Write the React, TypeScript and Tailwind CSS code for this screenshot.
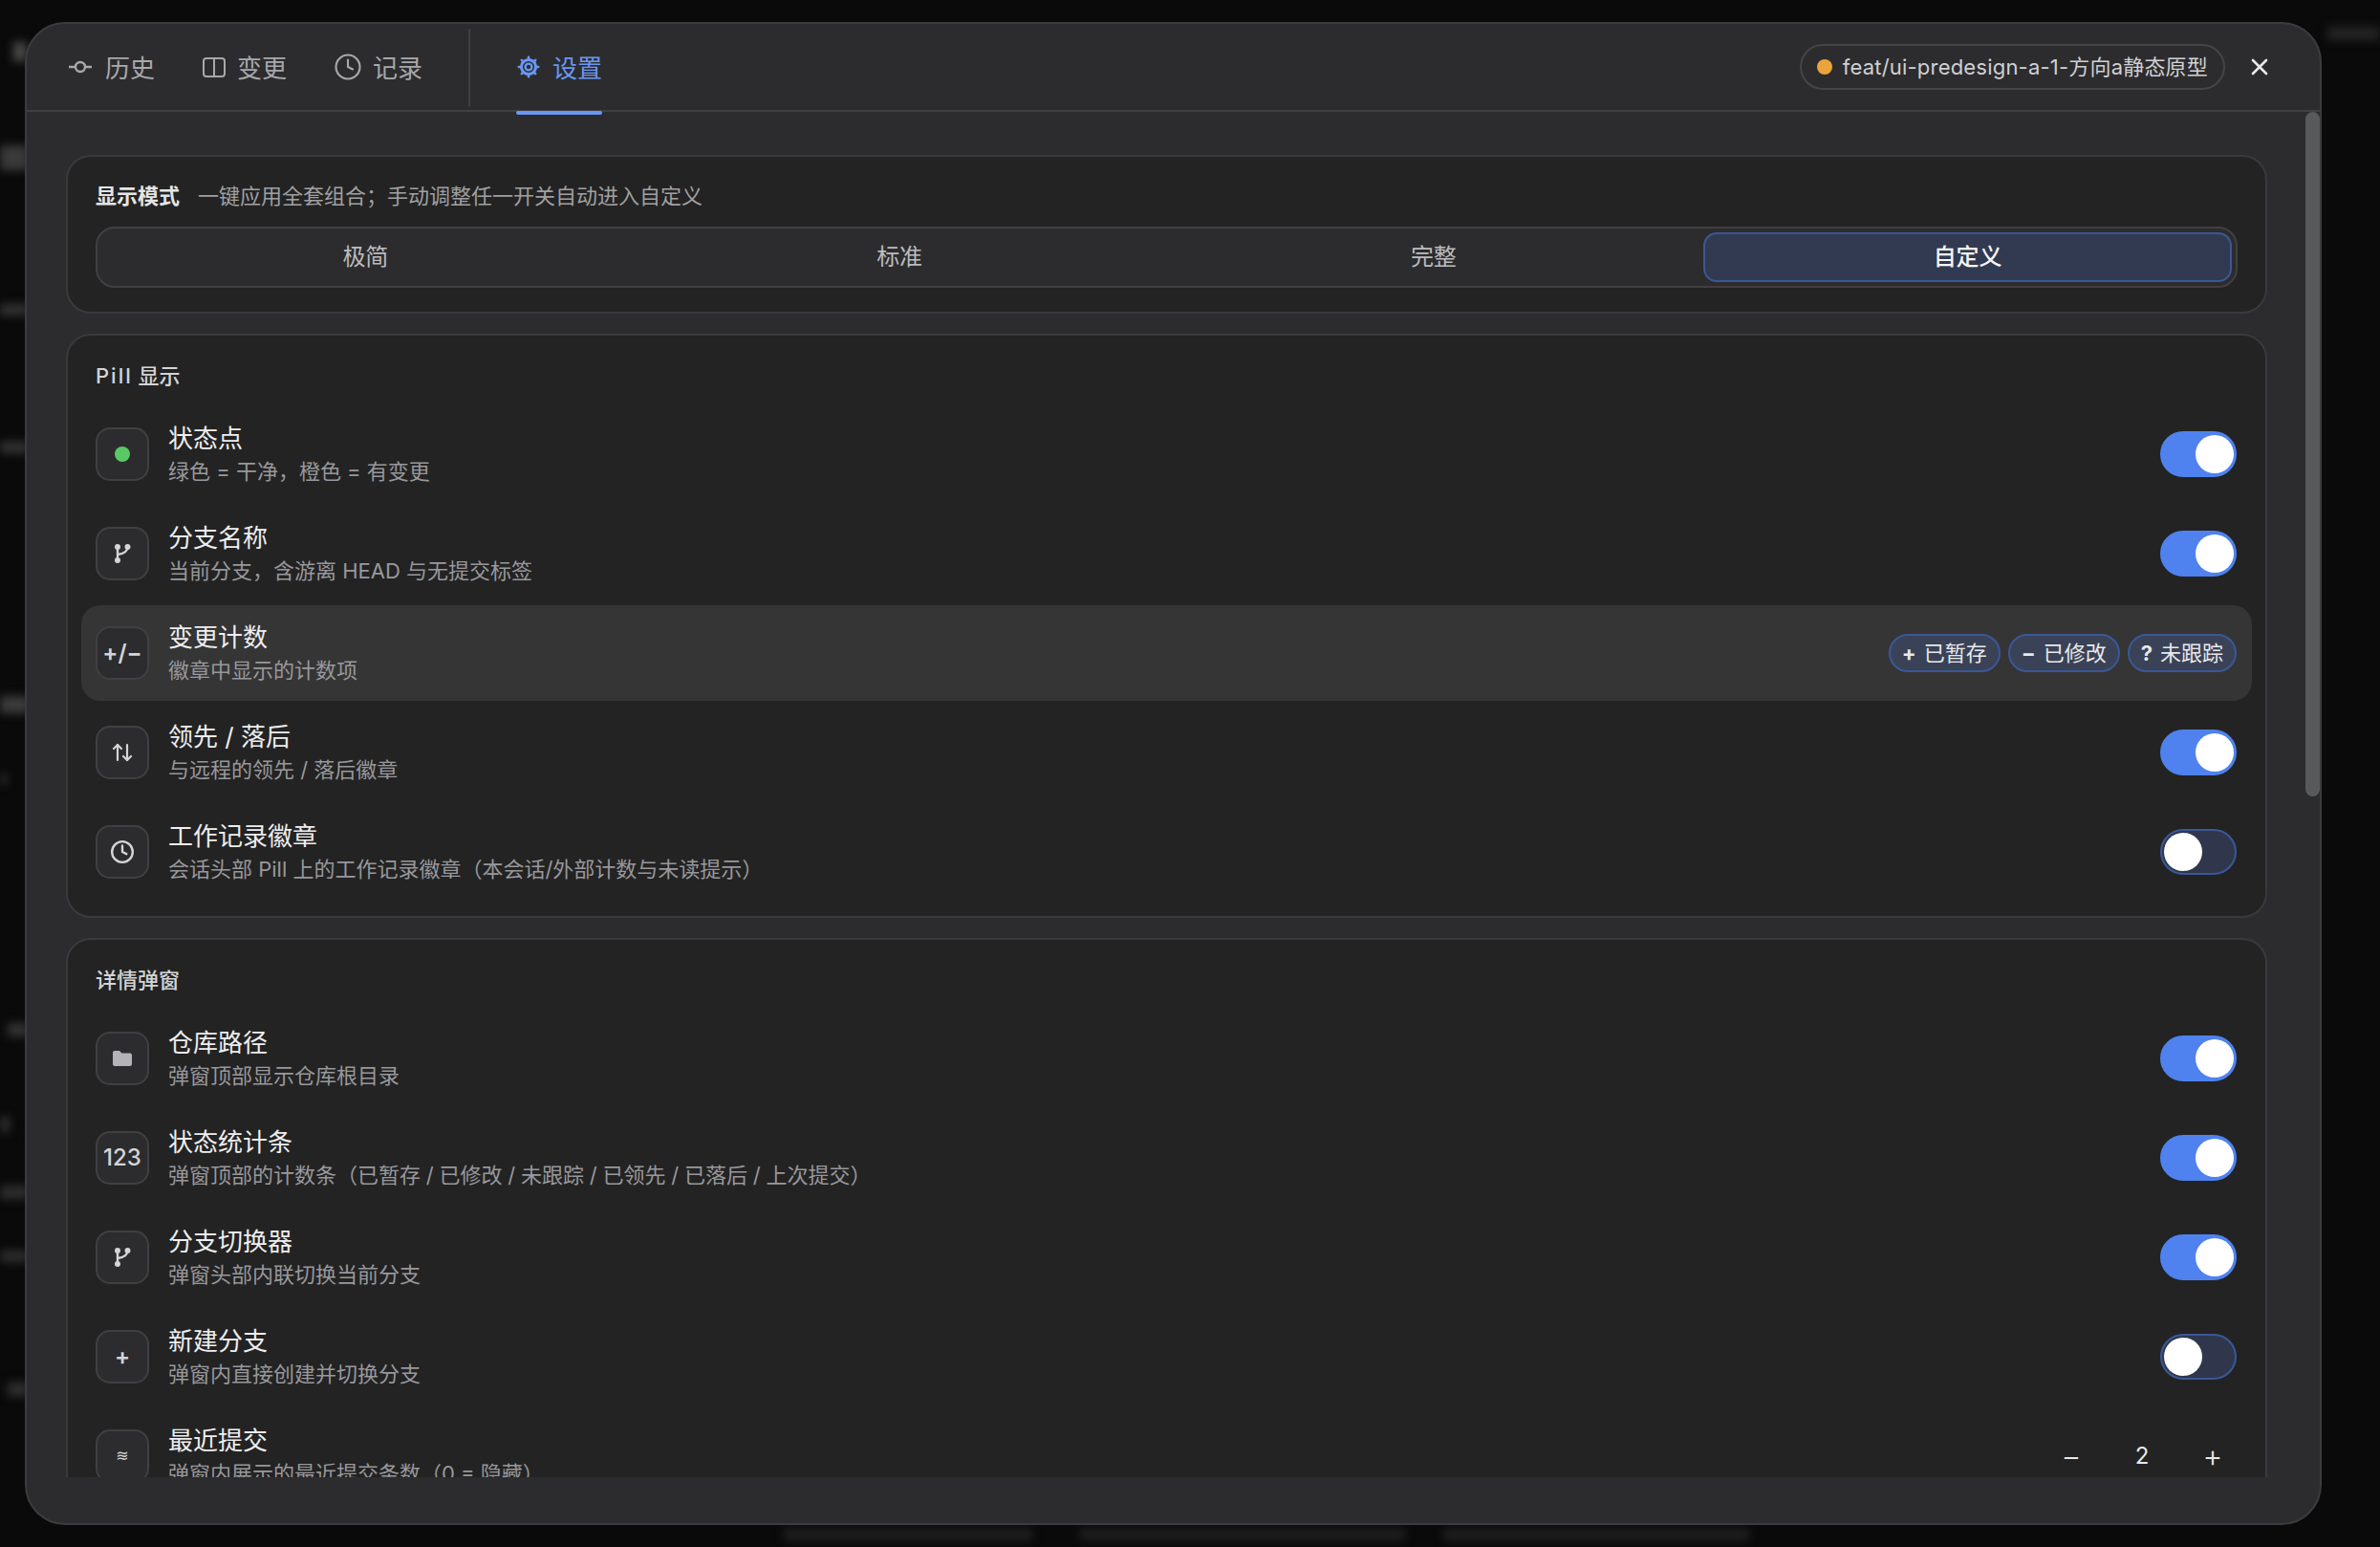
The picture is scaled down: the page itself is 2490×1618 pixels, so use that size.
import type { ReactNode } from "react"
import { ArrowUpDown, Clock } from "lucide-react"

const BACKDROP = [
  "top-[44px] left-[14px] w-[14px] h-[20px] bg-[#4a4a4a]",
  "top-[152px] left-0 w-[30px] h-[26px] bg-[#3a3a3a]",
  "top-[318px] left-0 w-[30px] h-[12px] bg-[#333333]",
  "top-[462px] left-0 w-[30px] h-[12px] bg-[#333333]",
  "top-[728px] left-0 w-[30px] h-[18px] bg-[#3c3c3c]",
  "top-[810px] left-0 w-[8px] h-[10px] bg-[#2c2c2c]",
  "top-[1070px] left-[8px] w-[22px] h-[14px] bg-[#333333]",
  "top-[1168px] left-0 w-[10px] h-[16px] bg-[#303030]",
  "top-[1240px] left-0 w-[30px] h-[14px] bg-[#2e2e2e]",
  "top-[1308px] left-0 w-[30px] h-[12px] bg-[#2e2e2e]",
  "top-[1446px] left-[8px] w-[22px] h-[14px] bg-[#303030]",
  "top-[1598px] left-[820px] w-[260px] h-[14px] bg-[#1e1e1e]",
  "top-[1598px] left-[1130px] w-[340px] h-[14px] bg-[#1e1e1e]",
  "top-[1598px] left-[1510px] w-[320px] h-[14px] bg-[#1e1e1e]",
  "top-[28px] left-[2435px] w-[55px] h-[14px] bg-[#242424]",
]

function Backdrop() {
  return (
    <>
      {BACKDROP.map((cls) => (
        <div key={cls} className={`absolute blur-[5px] ${cls}`} />
      ))}
    </>
  )
}

function CommitIcon() {
  return (
    <svg width="24" height="16" viewBox="0 0 24 16" fill="none" stroke="#a8a8aa" strokeWidth="2.4">
      <circle cx="12" cy="8" r="5" />
      <path d="M0 8h7M17 8h7" />
    </svg>
  )
}

function ColumnsIcon() {
  return (
    <svg width="24" height="21" viewBox="0 0 24 21" fill="none" stroke="#a8a8aa" strokeWidth="2">
      <rect x="1" y="1" width="22" height="19" rx="3" />
      <path d="M12 1v19" />
    </svg>
  )
}

function GearIcon() {
  return (
    <svg width="26" height="26" viewBox="0 0 26 26" fill="none" stroke="#6a97f4">
      <circle cx="13" cy="13" r="3.4" strokeWidth="2.4" />
      <circle cx="13" cy="13" r="7.600" strokeWidth="3" />
      <path
        d="M13 2.800v2.400M13 20.800v2.400M2.800 13h2.400M20.800 13h2.400M5.800 5.800l1.700 1.700M18.500 18.500l1.700 1.700M5.800 20.200l1.700-1.700M18.500 7.500l1.700-1.700"
        strokeWidth="2.600"
        strokeLinecap="round"
      />
    </svg>
  )
}

function BranchIcon() {
  return (
    <svg width="24" height="24" viewBox="0 0 24 24" fill="none" stroke="#d4d4d6" strokeWidth="2.4">
      <path d="M7 5v14M17.500 5c0 4.500-3 7-10.500 8" />
      <circle cx="7" cy="5" r="3" fill="#d4d4d6" stroke="none" />
      <circle cx="17.500" cy="5" r="3" fill="#d4d4d6" stroke="none" />
      <circle cx="7" cy="19" r="3" fill="#d4d4d6" stroke="none" />
    </svg>
  )
}

function FolderIcon() {
  return (
    <svg width="20" height="16" viewBox="0 0 20 16" fill="#b4b4b8">
      <path d="M0 2a2 2 0 0 1 2-2h5l2.500 2.500H18a2 2 0 0 1 2 2V14a2 2 0 0 1-2 2H2a2 2 0 0 1-2-2V2z" />
    </svg>
  )
}

function Toggle({ on }: { on: boolean }) {
  return (
    <div
      className={
        on
          ? "flex h-[48px] w-[80px] items-center justify-end rounded-full border-2 border-[#4f82ee] bg-[#4f82ee] pr-[1px]"
          : "flex h-[48px] w-[80px] items-center justify-start rounded-full border-2 border-[#3a5898] bg-[#30374d] pl-[2px]"
      }
    >
      <div className="h-[40px] w-[40px] rounded-full bg-white" />
    </div>
  )
}

function CountChip({ sign, label }: { sign: string; label: string }) {
  return (
    <span className="flex h-[40px] items-center gap-[8px] rounded-full border-2 border-[#3a5898] bg-[#3a4257] px-[12px] text-[22px] text-[#e8e8ea]">
      <b className="font-bold">{sign}</b>
      {label}
    </span>
  )
}

function Stepper({ value }: { value: number }) {
  return (
    <div className="flex items-center text-[#e8e8ea]">
      <span className="flex w-[50px] justify-center text-[32px] font-light leading-[32px]">−</span>
      <span className="flex w-[98px] justify-center text-[24px] leading-[32px]">{value}</span>
      <span className="flex w-[50px] justify-center text-[32px] font-light leading-[32px]">+</span>
    </div>
  )
}

function Row({
  icon,
  title,
  desc,
  action,
  active,
}: {
  icon: ReactNode
  title: string
  desc: ReactNode
  action: ReactNode
  active?: boolean
}) {
  return (
    <div
      className={
        active
          ? "flex h-[100px] items-center justify-between rounded-[20px] bg-[#353535] pl-[15px] pr-[16px]"
          : "flex h-[100px] items-center justify-between rounded-[20px] pl-[15px] pr-[16px]"
      }
    >
      <div className="flex items-center gap-[20px]">
        <div className="flex h-[56px] w-[56px] shrink-0 items-center justify-center rounded-[15px] border-2 border-[#404042] bg-[#2c2c2e] text-[#d4d4d6]">
          {icon}
        </div>
        <div>
          <p className="text-[26px] leading-[36px] text-[#eeeef0]">{title}</p>
          <p className="text-[22px] leading-[32px] text-[#98989c]">{desc}</p>
        </div>
      </div>
      {action}
    </div>
  )
}

function Section({ title, children }: { title: ReactNode; children: ReactNode }) {
  return (
    <section className="rounded-[26px] border-2 border-[#3a3a3c] bg-[#232323] px-[14px] pb-[17px] pt-[27px]">
      <h3 className="px-[15px] pb-[17px] text-[22px] font-medium leading-[30px] text-[#d4d4d6]">{title}</h3>
      <div className="flex flex-col gap-[4px]">{children}</div>
    </section>
  )
}

export default function App() {
  return (
    <div className="relative flex h-[1618px] w-[2490px] items-center overflow-hidden bg-[#0a0a0a] pl-[26px] font-['Inter','Noto_Sans_CJK_SC',sans-serif]">
      <Backdrop />

      <div className="relative flex h-[1572px] w-[2403px] flex-col overflow-hidden rounded-[42px] border-2 border-[#3c3c3e] bg-[#2c2c2e]">
        {/* Header */}
        <header className="flex h-[92px] shrink-0 items-center justify-between border-b-2 border-[#404042] pl-[44px] pr-[54px]">
          <div className="flex items-center text-[26px] text-[#a8a8aa]">
            <CommitIcon />
            <span className="ml-[14px] pt-[3px]">历史</span>
            <span className="ml-[50px]">
              <ColumnsIcon />
            </span>
            <span className="ml-[12px] pt-[3px]">变更</span>
            <span className="ml-[49px] flex">
              <Clock size={30} strokeWidth={1.7} />
            </span>
            <span className="ml-[11px] pt-[3px]">记录</span>
            <div className="ml-[48px] h-[81px] w-[2px] bg-[#404042]" />
            <div className="relative ml-[48px] flex items-center gap-[12px] text-[#6a97f4]">
              <GearIcon />
              <span className="pt-[3px]">设置</span>
              <div className="absolute -bottom-[29px] left-0 right-0 h-[4px] rounded-full bg-[#6a97f4]" />
            </div>
          </div>
          <div className="flex items-center gap-[27px]">
            <div className="flex h-[48px] items-center gap-[11px] rounded-full border-2 border-[#454547] pl-[16px] pr-[16px] text-[22px] tracking-[0.2px] text-[#d0d0d2]">
              <span className="h-[16px] w-[16px] rounded-full bg-[#eba43c]" />
              feat/ui-predesign-a-1-方向a静态原型
            </div>
            <svg width="18" height="18" viewBox="0 0 18 18" stroke="#e8e8ea" strokeWidth="2.6" strokeLinecap="round">
              <path d="M2 2l14 14M16 2L2 16" />
            </svg>
          </div>
        </header>

        {/* Body */}
        <div className="relative flex-1 overflow-hidden">
          <div className="flex flex-col gap-[21px] pl-[41px] pr-[55px] pt-[45px]">
            <section className="rounded-[26px] border-2 border-[#3a3a3c] bg-[#232323] px-[29px] pb-[25px] pt-[26px]">
              <div className="flex items-center gap-[19px] text-[22px] leading-[30px]">
                <span className="font-semibold text-[#e4e4e6]">显示模式</span>
                <span className="text-[#a0a0a2]">一键应用全套组合；手动调整任一开关自动进入自定义</span>
              </div>
              <div className="mt-[17px] grid h-[64px] grid-cols-4 gap-[6px] rounded-[20px] border-2 border-[#404042] bg-[#2c2c2e] p-[4px] text-[24px] text-[#bcbcbe]">
                <div className="flex items-center justify-center">极简</div>
                <div className="flex items-center justify-center">标准</div>
                <div className="flex items-center justify-center">完整</div>
                <div className="flex items-center justify-center rounded-[14px] border-2 border-[#3a5898] bg-[#313a50] font-medium text-[#f5f5f7]">
                  自定义
                </div>
              </div>
            </section>

            <Section
              title={
                <>
                  <span className="tracking-[2px]">Pill</span> 显示
                </>
              }
            >
              <Row
                icon={<span className="h-[16px] w-[16px] rounded-full bg-[#5ac864]" />}
                title="状态点"
                desc="绿色 = 干净，橙色 = 有变更"
                action={<Toggle on />}
              />
              <Row
                icon={<BranchIcon />}
                title="分支名称"
                desc="当前分支，含游离 HEAD 与无提交标签"
                action={<Toggle on />}
              />
              <Row
                active
                icon={<span className="text-[24px] font-semibold">+/−</span>}
                title="变更计数"
                desc="徽章中显示的计数项"
                action={
                  <div className="flex items-center gap-[8px]">
                    <CountChip sign="+" label="已暂存" />
                    <CountChip sign="−" label="已修改" />
                    <CountChip sign="?" label="未跟踪" />
                  </div>
                }
              />
              <Row
                icon={<ArrowUpDown size={24} strokeWidth={2.2} />}
                title="领先 / 落后"
                desc="与远程的领先 / 落后徽章"
                action={<Toggle on />}
              />
              <Row
                icon={<Clock size={26} strokeWidth={2.2} />}
                title="工作记录徽章"
                desc="会话头部 Pill 上的工作记录徽章（本会话/外部计数与未读提示）"
                action={<Toggle on={false} />}
              />
            </Section>

            <Section title="详情弹窗">
              <Row icon={<FolderIcon />} title="仓库路径" desc="弹窗顶部显示仓库根目录" action={<Toggle on />} />
              <Row
                icon={<span className="text-[24px] font-medium">123</span>}
                title="状态统计条"
                desc={
                  <span className="[word-spacing:-0.4px]">
                    弹窗顶部的计数条（已暂存 / 已修改 / 未跟踪 / 已领先 / 已落后 / 上次提交）
                  </span>
                }
                action={<Toggle on />}
              />
              <Row icon={<BranchIcon />} title="分支切换器" desc="弹窗头部内联切换当前分支" action={<Toggle on />} />
              <Row
                icon={<span className="text-[24px] font-semibold">+</span>}
                title="新建分支"
                desc="弹窗内直接创建并切换分支"
                action={<Toggle on={false} />}
              />
              <Row
                icon={<span className="font-['DejaVu_Sans',sans-serif] text-[16px]">≋</span>}
                title="最近提交"
                desc="弹窗内展示的最近提交条数（0 = 隐藏）"
                action={<Stepper value={2} />}
              />
            </Section>
          </div>

          <div className="absolute right-0 top-0 h-[716px] w-[15px] rounded-full bg-[#58595b]" />
        </div>

        <div className="h-[48px] shrink-0" />
      </div>
    </div>
  )
}
